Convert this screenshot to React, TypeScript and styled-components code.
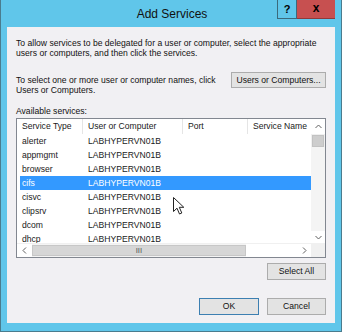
import styled, { createGlobalStyle } from "styled-components";

const GlobalStyle = createGlobalStyle`
  html, body {
    margin: 0;
    padding: 0;
    background: #ffffff;
  }
  body {
    font-family: "Liberation Sans", Arial, sans-serif;
  }
`;

const services = [
  "alerter",
  "appmgmt",
  "browser",
  "cifs",
  "cisvc",
  "clipsrv",
  "dcom",
  "dhcp",
];

const App = () => {
  return (
    <>
      <GlobalStyle />
      <Frame>
        <TitleBar>
          <Title>Add Services</Title>
          <CaptionButtons>
            <HelpButton>?</HelpButton>
            <CloseButton>x</CloseButton>
          </CaptionButtons>
        </TitleBar>
        <Client>
          <Paragraph>
            To allow services to be delegated for a user or computer, select the
            appropriate users or computers, and then click the services.
          </Paragraph>
          <PickRow>
            <Paragraph>
              To select one or more user or computer names, click Users or
              Computers.
            </Paragraph>
            <Button $width={95}>Users or Computers...</Button>
          </PickRow>
          <Label>Available services:</Label>
          <ListBox>
            <ListMain>
              <ListArea>
                <Header>
                  <HeaderCell>Service Type</HeaderCell>
                  <HeaderCell>User or Computer</HeaderCell>
                  <HeaderCell>Port</HeaderCell>
                  <HeaderCell $last>Service Name</HeaderCell>
                </Header>
                <Rows>
                  {services.map((s) => (
                    <Row key={s} $selected={s === "cifs"}>
                      <Cell>{s}</Cell>
                      <Cell>LABHYPERVN01B</Cell>
                      <Cell />
                      <Cell />
                    </Row>
                  ))}
                </Rows>
              </ListArea>
              <VScroll>
                <ArrowBox $h={15}>
                  <svg width="7" height="5" viewBox="0 0 7 5">
                    <path d="M0.5 4 L3.5 1 L6.5 4" fill="none" stroke="#606060" />
                  </svg>
                </ArrowBox>
                <VThumb />
                <VTrack />
                <ArrowBox $h={12}>
                  <svg width="7" height="5" viewBox="0 0 7 5">
                    <path d="M0.5 1 L3.5 4 L6.5 1" fill="none" stroke="#606060" />
                  </svg>
                </ArrowBox>
              </VScroll>
            </ListMain>
            <HScrollRow>
              <HScroll>
                <ArrowBox $w={15}>
                  <svg width="5" height="7" viewBox="0 0 5 7">
                    <path d="M4 0.5 L1 3.5 L4 6.5" fill="none" stroke="#606060" />
                  </svg>
                </ArrowBox>
                <HThumb>
                  <Grip>III</Grip>
                </HThumb>
                <HTrack />
                <ArrowBox $w={14}>
                  <svg width="5" height="7" viewBox="0 0 5 7">
                    <path d="M1 0.5 L4 3.5 L1 6.5" fill="none" stroke="#606060" />
                  </svg>
                </ArrowBox>
              </HScroll>
              <Corner />
            </HScrollRow>
          </ListBox>
          <RightRow>
            <Button $width={59}>Select All</Button>
          </RightRow>
          <ButtonRow>
            <Button $width={60} $default>
              OK
            </Button>
            <Button $width={59}>Cancel</Button>
          </ButtonRow>
        </Client>
        <Cursor width="12" height="18" viewBox="0 0 12 18">
          <path
            d="M0.5 0.5 L0.5 14.5 L4 11.2 L6.5 17 L8.8 16 L6.3 10.3 L10.8 10.3 Z"
            fill="#ffffff"
            stroke="#222222"
            strokeWidth="1"
            strokeLinejoin="miter"
          />
        </Cursor>
      </Frame>
    </>
  );
};

const Frame = styled.div`
  position: relative;
  width: 342px;
  height: 332px;
  box-sizing: border-box;
  background: #60c6ea;
  border-left: 1px solid #4a7c8e;
  border-right: 1px solid #4a7c8e;
  border-bottom: 1px solid #4a7c8e;
  padding: 0 6px 8px 6px;
  display: flex;
  flex-direction: column;
  overflow: hidden;
`;

const TitleBar = styled.div`
  position: relative;
  height: 27px;
  display: flex;
  justify-content: center;
`;

const Title = styled.div`
  font-size: 12px;
  color: #111111;
  line-height: 28px;
  padding-left: 2px;
`;

const CaptionButtons = styled.div`
  position: absolute;
  top: 0;
  right: 0;
  display: flex;
`;

const HelpButton = styled.div`
  width: 20px;
  height: 19px;
  box-sizing: border-box;
  border: 1px solid #3b6a7c;
  border-top: none;
  background: #60c6ea;
  color: #000000;
  font-weight: bold;
  font-size: 11px;
  text-align: center;
  line-height: 18px;
`;

const CloseButton = styled.div`
  width: 38px;
  height: 19px;
  box-sizing: border-box;
  background: #c75050;
  border-bottom: 1px solid #8f3a3a;
  color: #000000;
  font-weight: bold;
  font-size: 12px;
  text-align: center;
  line-height: 17px;
`;

const Client = styled.div`
  position: relative;
  flex: 1;
  background: #f1f0f3;
  padding: 12px 8px 0 9px;
  display: flex;
  flex-direction: column;
  font-size: 8.6px;
  color: #111111;
  overflow: hidden;
`;

const Paragraph = styled.div`
  line-height: 9.5px;
`;

const PickRow = styled.div`
  margin-top: 18px;
  display: flex;
  justify-content: space-between;
  align-items: flex-start;
  gap: 10px;
  padding-right: 1px;
  & > ${Paragraph} {
    width: 200px;
  }
`;

const Button = styled.div<{ $width: number; $default?: boolean }>`
  width: ${(p) => p.$width}px;
  height: 16px;
  box-sizing: border-box;
  flex-shrink: 0;
  border: 1px solid ${(p) => (p.$default ? "#3c7fb1" : "#acacac")};
  background: #e3e3e3;
  font-size: 8.6px;
  text-align: center;
  line-height: 14px;
  white-space: nowrap;
  margin-top: -4px;
`;

const Label = styled.div`
  margin-top: 11px;
  line-height: 10px;
`;

const ListBox = styled.div`
  margin-top: 2px;
  width: 310px;
  height: 140px;
  box-sizing: border-box;
  border: 1px solid #828790;
  background: #ffffff;
  display: flex;
  flex-direction: column;
`;

const ListMain = styled.div`
  flex: 1;
  display: flex;
  min-height: 0;
`;

const ListArea = styled.div`
  flex: 1;
  overflow: hidden;
`;

const Header = styled.div`
  display: grid;
  grid-template-columns: 66px 100px 65px 1fr;
  height: 15px;
`;

const HeaderCell = styled.div<{ $last?: boolean }>`
  border-right: ${(p) => (p.$last ? "none" : "1px solid #e5e5e5")};
  padding-left: 5px;
  line-height: 15px;
  white-space: nowrap;
  overflow: hidden;
  color: #1a1a1a;
`;

const Rows = styled.div`
  display: flex;
  flex-direction: column;
`;

const Row = styled.div<{ $selected?: boolean }>`
  display: grid;
  grid-template-columns: 63px 100px 65px 1fr;
  height: 14px;
  margin-left: 3px;
  background: ${(p) => (p.$selected ? "#3399ff" : "transparent")};
  color: ${(p) => (p.$selected ? "#ffffff" : "#1a1a1a")};
`;

const Cell = styled.div`
  padding-left: 2px;
  line-height: 14px;
  white-space: nowrap;
  overflow: hidden;
  & + & {
    padding-left: 5px;
  }
`;

const VScroll = styled.div`
  width: 14px;
  display: flex;
  flex-direction: column;
  background: #f0f0f0;
`;

const ArrowBox = styled.div<{ $h?: number; $w?: number }>`
  ${(p) => (p.$h ? `height: ${p.$h}px;` : "")}
  ${(p) => (p.$w ? `width: ${p.$w}px;` : "")}
  display: flex;
  align-items: center;
  justify-content: center;
  background: #ffffff;
  flex-shrink: 0;
`;

const VThumb = styled.div`
  height: 12px;
  margin: 1px 1px 0 1px;
  background: #cdcdcd;
  border: 1px solid #c2c2c2;
  box-sizing: border-box;
`;

const VTrack = styled.div`
  flex: 1;
  background: #f4f4f4;
`;

const HScrollRow = styled.div`
  height: 13px;
  display: flex;
  border-top: 1px solid #f0f0f0;
`;

const HScroll = styled.div`
  flex: 1;
  display: flex;
  background: #f4f4f4;
`;

const HThumb = styled.div`
  width: 214px;
  background: #d6d6d6;
  border: 1px solid #c7c7c7;
  box-sizing: border-box;
  margin: 1px 0;
  display: flex;
  align-items: center;
  justify-content: center;
`;

const Grip = styled.span`
  font-size: 7px;
  color: #555555;
  line-height: 8px;
  transform: scaleX(1.1);
`;

const HTrack = styled.div`
  flex: 1;
  background: #ffffff;
`;

const Corner = styled.div`
  width: 14px;
  background: #f0f0f0;
`;

const RightRow = styled.div`
  margin-top: 5px;
  display: flex;
  justify-content: flex-end;
  padding-right: 1px;
  & > div {
    margin-top: 0;
    height: 17px;
    line-height: 15px;
  }
`;

const ButtonRow = styled.div`
  margin-top: 18px;
  display: flex;
  justify-content: flex-end;
  gap: 8px;
  padding-right: 1px;
  & > div {
    margin-top: 0;
    height: 17px;
    line-height: 15px;
  }
`;

const Cursor = styled.svg`
  position: absolute;
  left: 172px;
  top: 197px;
  z-index: 5;
`;

export default App;
